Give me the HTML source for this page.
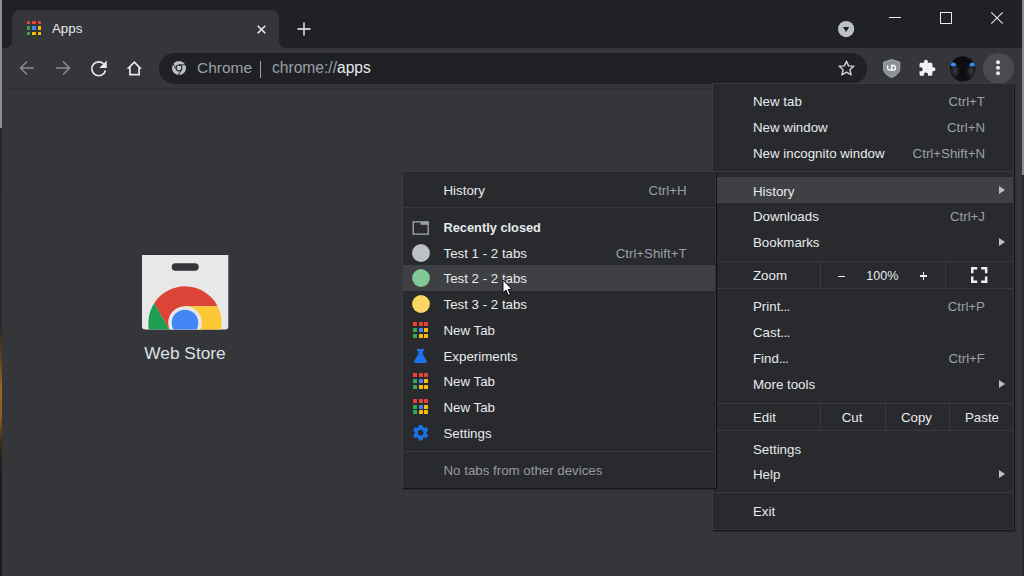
<!DOCTYPE html>
<html><head><meta charset="utf-8">
<style>
*{margin:0;padding:0;box-sizing:border-box}
html,body{width:1024px;height:576px;overflow:hidden;background:#35363a;font-family:"Liberation Sans",sans-serif;position:relative}
.abs{position:absolute}
.t{position:absolute;white-space:nowrap;line-height:1}
svg{position:absolute;overflow:visible}
</style></head><body>
<div class="abs" style="left:0px;top:0px;width:1024px;height:48px;background:#202124;"></div>
<div class="abs" style="left:12px;top:10px;width:267px;height:38px;background:#35363a;border-radius:8px 8px 0 0"></div>
<svg style="left:4px;top:40px" width="8" height="8"><path d="M0 8 Q8 8 8 0 L8 8 Z" fill="#35363a"/></svg>
<svg style="left:279px;top:40px" width="8" height="8"><path d="M0 0 Q0 8 8 8 L0 8 Z" fill="#35363a"/></svg>
<div class="abs" style="left:0px;top:48px;width:1024px;height:40px;background:#35363a;"></div>
<div class="abs" style="left:0px;top:88px;width:1024px;height:1px;background:#2e2f33;"></div>
<div class="abs" style="left:159px;top:53px;width:708px;height:31px;background:#202124;border-radius:15.5px"></div>
<div class="abs" style="left:26.60px;top:20.70px;width:3.7px;height:3.7px;background:#ea4335;border-radius:0.5px"></div>
<div class="abs" style="left:32.05px;top:20.70px;width:3.7px;height:3.7px;background:#ea4335;border-radius:0.5px"></div>
<div class="abs" style="left:37.50px;top:20.70px;width:3.7px;height:3.7px;background:#ea4335;border-radius:0.5px"></div>
<div class="abs" style="left:26.60px;top:26.15px;width:3.7px;height:3.7px;background:#34a853;border-radius:0.5px"></div>
<div class="abs" style="left:32.05px;top:26.15px;width:3.7px;height:3.7px;background:#4285f4;border-radius:0.5px"></div>
<div class="abs" style="left:37.50px;top:26.15px;width:3.7px;height:3.7px;background:#fbbc04;border-radius:0.5px"></div>
<div class="abs" style="left:26.60px;top:31.60px;width:3.7px;height:3.7px;background:#34a853;border-radius:0.5px"></div>
<div class="abs" style="left:32.05px;top:31.60px;width:3.7px;height:3.7px;background:#fbbc04;border-radius:0.5px"></div>
<div class="abs" style="left:37.50px;top:31.60px;width:3.7px;height:3.7px;background:#fbbc04;border-radius:0.5px"></div>
<div class="t" style="left:52.00px;top:21.54px;font-size:13.3px;color:#e8eaed;font-weight:normal;">Apps</div>
<svg style="left:257px;top:24.5px" width="9" height="9"><path d="M0.7 0.7 L8.3 8.3 M8.3 0.7 L0.7 8.3" stroke="#e8eaed" stroke-width="1.6"/></svg>
<svg style="left:297px;top:22px" width="14" height="14"><path d="M7 0.5 V13.5 M0.5 7 H13.5" stroke="#c4c7ca" stroke-width="1.8"/></svg>
<svg style="left:837.6px;top:21.2px" width="16.2" height="16.2"><circle cx="8.1" cy="8.1" r="8.1" fill="#bdc1c6"/><path d="M5.0 5.9 H11.2 L8.1 10.9 Z" fill="#202124"/></svg>
<div class="abs" style="left:889px;top:17px;width:12px;height:1px;background:#e8eaed;"></div>
<svg style="left:940px;top:11.5px" width="12" height="12"><rect x="0.5" y="0.5" width="11" height="11" fill="none" stroke="#e8eaed" stroke-width="1"/></svg>
<svg style="left:991px;top:11.5px" width="12" height="12"><path d="M0.3 0.3 L11.7 11.7 M11.7 0.3 L0.3 11.7" stroke="#e8eaed" stroke-width="1.1"/></svg>
<svg style="left:19px;top:60px" width="16" height="16"><path d="M15 8 H2 M8 1.5 L1.5 8 L8 14.5" fill="none" stroke="#8b8c8f" stroke-width="1.5"/></svg>
<svg style="left:55px;top:60px" width="16" height="16"><path d="M1 8 H14 M8 1.5 L14.5 8 L8 14.5" fill="none" stroke="#8b8c8f" stroke-width="1.5"/></svg>
<svg style="left:87.4px;top:57.1px" width="23.5" height="23.5" viewBox="0 0 24 24"><path d="M17.02 6.98 A7.1 7.1 0 1 0 18.87 13.78" fill="none" stroke="#e8eaed" stroke-width="1.75"/><path d="M12.6 11.2 H20.2 V3.6 Z" fill="#e8eaed"/></svg>
<svg style="left:126px;top:60px" width="17" height="17"><path d="M8.3 2.1 L14.0 8.0 H13.1 V14.7 H3.9 V8.0 H2.6 Z" fill="none" stroke="#e8eaed" stroke-width="1.7" stroke-linejoin="miter"/></svg>
<svg style="left:172px;top:61px" width="14" height="14"><circle cx="7" cy="7" r="7" fill="#bdc1c6"/><circle cx="7" cy="7" r="3.4" fill="#202124"/><circle cx="7" cy="7" r="2.4" fill="#bdc1c6"/>
<path d="M7 3.9 L13.6 3.9 M4.4 8.5 L1.1 2.8 M9.6 8.5 L6.3 14.2" stroke="#202124" stroke-width="1"/></svg>
<div class="t" style="left:197.00px;top:60.48px;font-size:15.5px;color:#9aa0a6;font-weight:normal;">Chrome</div>
<div class="abs" style="left:260px;top:61px;width:1.2px;height:16.5px;background:#9aa0a6;"></div>
<div class="t" style="left:272.00px;top:60.39px;font-size:15.6px;color:#9aa0a6;font-weight:normal;">chrome://<span style="color:#e8eaed">apps</span></div>
<svg style="left:838px;top:60px" width="17" height="16"><path d="M8.5 1.2 L10.6 5.9 L15.8 6.3 L11.9 9.7 L13.1 14.8 L8.5 12.1 L3.9 14.8 L5.1 9.7 L1.2 6.3 L6.4 5.9 Z" fill="none" stroke="#d0d2d5" stroke-width="1.45" stroke-linejoin="round"/></svg>
<svg style="left:882.5px;top:59px" width="18" height="19"><path d="M8.7 0.6 L16.8 3.2 V9.5 C16.8 13.5 13.5 16.5 8.7 18.4 C3.9 16.5 0.6 13.5 0.6 9.5 V3.2 Z" fill="#8d9196" stroke="#a9adb1" stroke-width="1"/>
<path d="M4.6 6.3 V9 A2.05 2.05 0 0 0 8.7 9 V6.3" fill="none" stroke="#f1f3f4" stroke-width="1.5"/><path d="M8.7 6.2 H9.9 A2.55 2.55 0 0 1 9.9 11.3 H8.7 Z" fill="none" stroke="#f1f3f4" stroke-width="1.5"/></svg>
<svg style="left:917.8px;top:59.2px" width="18.2" height="18.2" viewBox="0 0 24 24"><path fill="#f1f3f4" d="M20.5 11H19V7c0-1.1-.9-2-2-2h-4V3.5C13 2.12 11.880 1 10.5 1S8 2.12 8 3.5V5H4c-1.1 0-1.99.9-1.99 2v3.8H3.5c1.49 0 2.7 1.21 2.7 2.7s-1.21 2.7-2.7 2.7H2V20c0 1.1.9 2 2 2h3.8v-1.5c0-1.490 1.21-2.7 2.7-2.7 1.49 0 2.7 1.21 2.7 2.7V22H17c1.1 0 2-.9 2-2v-4h1.5c1.38 0 2.5-1.12 2.5-2.5S21.88 11 20.5 11z"/></svg>
<svg style="left:949.5px;top:55.8px" width="26" height="26"><defs><clipPath id="avc"><circle cx="12.75" cy="12.75" r="12.6"/></clipPath>
<radialGradient id="avl" cx="0.5" cy="0.5" r="0.5"><stop offset="0" stop-color="#383c3f"/><stop offset="1" stop-color="#383c3f" stop-opacity="0"/></radialGradient></defs>
<g clip-path="url(#avc)"><rect width="26" height="26" fill="#0d0e10"/>
<ellipse cx="5" cy="15" rx="5" ry="8" fill="url(#avl)"/><ellipse cx="21" cy="15" rx="5" ry="8" fill="url(#avl)"/>
<ellipse cx="3.2" cy="8.5" rx="2.9" ry="2.0" fill="#2a8cf5" transform="rotate(12 3.2 8.5)"/><ellipse cx="22.4" cy="8.5" rx="2.9" ry="2.0" fill="#2a8cf5" transform="rotate(-12 22.4 8.5)"/></g></svg>
<svg style="left:983px;top:53px" width="31" height="31"><circle cx="15.5" cy="15.5" r="15.5" fill="#4a4b4e"/><circle cx="15" cy="9.3" r="2" fill="#e8eaed"/><circle cx="15" cy="14.8" r="2" fill="#e8eaed"/><circle cx="15" cy="20.3" r="2" fill="#e8eaed"/></svg>
<div class="abs" style="left:0px;top:0px;width:2px;height:128px;background:#8e8e8e;"></div>
<div class="abs" style="left:0px;top:128px;width:2px;height:448px;background:linear-gradient(#24262a 0px,#2a2a2a 100px,#2c2824 200px,#5a4020 230px,#9a6824 260px,#8a5a20 290px,#3a2a1c 315px,#1e1a18 345px,#1e1a18 448px);"></div>
<div class="abs" style="left:1022px;top:0px;width:2px;height:175px;background:#8b8b8b;"></div>
<div class="abs" style="left:1022px;top:175px;width:2px;height:401px;background:#2f2a28;"></div>
<svg style="left:142px;top:255px" width="87" height="75" viewBox="0 0 87 75">
<defs><clipPath id="bag"><path d="M0 0 H86.3 V71.6 A3 3 0 0 1 83.3 74.6 H3 A3 3 0 0 1 0 71.6 Z"/></clipPath></defs>
<path d="M0 0 H86.3 V71.6 A3 3 0 0 1 83.3 74.6 H3 A3 3 0 0 1 0 71.6 Z" fill="#e8e8e8"/>
<rect x="29.7" y="8.2" width="27" height="7.5" rx="3.75" fill="#35363a"/>
<g clip-path="url(#bag)"><g transform="translate(43 68)">
<path d="M0 -16.8 L32.6 -16.8 A36.7 36.7 0 0 0 -30.85 -19.83 L-14.55 8.4 Z" fill="#db4437"/>
<path d="M14.55 8.4 L-1.75 36.63 A36.7 36.7 0 0 0 32.6 -16.8 L0 -16.8 Z" fill="#fcc934"/>
<path d="M-14.55 8.4 L-30.85 -19.83 A36.7 36.7 0 0 0 -1.75 36.63 L14.55 8.4 Z" fill="#1e9e50"/>
<circle r="16.8" fill="#e8e8e8"/><circle r="13.3" fill="#4285f4"/>
</g></g></svg>
<div class="t" style="left:85.00px;width:200px;text-align:center;top:344.75px;font-size:17.3px;color:#dfe1e4;font-weight:normal;">Web Store</div>
<div class="abs" style="left:712px;top:83px;width:302px;height:447px;background:#292a2d;border:1px solid #3a3b3e;border-right-color:#313235;border-bottom-color:#313235;box-shadow:1px 1px 0 rgba(0,0,0,0.45),1px 2px 2px rgba(0,0,0,0.25)"></div>
<div class="abs" style="left:713px;top:177px;width:300px;height:26px;background:#3f4043;"></div>
<div class="t" style="left:753.00px;top:184.54px;font-size:13.3px;color:#e8eaed;font-weight:normal;">History</div>
<div class="t" style="left:753.00px;top:94.94px;font-size:13.3px;color:#e8eaed;font-weight:normal;">New tab</div>
<div class="t" style="right:39.00px;top:94.94px;font-size:13.3px;color:#9aa0a6;font-weight:normal;">Ctrl+T</div>
<div class="t" style="left:753.00px;top:120.74px;font-size:13.3px;color:#e8eaed;font-weight:normal;">New window</div>
<div class="t" style="right:39.00px;top:120.74px;font-size:13.3px;color:#9aa0a6;font-weight:normal;">Ctrl+N</div>
<div class="t" style="left:753.00px;top:146.54px;font-size:13.3px;color:#e8eaed;font-weight:normal;">New incognito window</div>
<div class="t" style="right:39.00px;top:146.54px;font-size:13.3px;color:#9aa0a6;font-weight:normal;">Ctrl+Shift+N</div>
<div class="t" style="left:753.00px;top:210.14px;font-size:13.3px;color:#e8eaed;font-weight:normal;">Downloads</div>
<div class="t" style="right:39.00px;top:210.14px;font-size:13.3px;color:#9aa0a6;font-weight:normal;">Ctrl+J</div>
<div class="t" style="left:753.00px;top:235.94px;font-size:13.3px;color:#e8eaed;font-weight:normal;">Bookmarks</div>
<div class="t" style="left:753.00px;top:300.34px;font-size:13.3px;color:#e8eaed;font-weight:normal;">Print<span style="letter-spacing:-0.6px">...</span></div>
<div class="t" style="right:39.00px;top:300.34px;font-size:13.3px;color:#9aa0a6;font-weight:normal;">Ctrl+P</div>
<div class="t" style="left:753.00px;top:326.14px;font-size:13.3px;color:#e8eaed;font-weight:normal;">Cast<span style="letter-spacing:-0.6px">...</span></div>
<div class="t" style="left:753.00px;top:351.84px;font-size:13.3px;color:#e8eaed;font-weight:normal;">Find<span style="letter-spacing:-0.6px">...</span></div>
<div class="t" style="right:39.00px;top:351.84px;font-size:13.3px;color:#9aa0a6;font-weight:normal;">Ctrl+F</div>
<div class="t" style="left:753.00px;top:378.04px;font-size:13.3px;color:#e8eaed;font-weight:normal;">More tools</div>
<div class="t" style="left:753.00px;top:442.64px;font-size:13.3px;color:#e8eaed;font-weight:normal;">Settings</div>
<div class="t" style="left:753.00px;top:468.44px;font-size:13.3px;color:#e8eaed;font-weight:normal;">Help</div>
<div class="t" style="left:753.00px;top:505.44px;font-size:13.3px;color:#e8eaed;font-weight:normal;">Exit</div>
<svg style="left:999px;top:186.4px" width="6" height="8"><path d="M0 0 L6 4 L0 8 Z" fill="#bdc1c6"/></svg>
<svg style="left:999px;top:237.6px" width="6" height="8"><path d="M0 0 L6 4 L0 8 Z" fill="#bdc1c6"/></svg>
<svg style="left:999px;top:380.0px" width="6" height="8"><path d="M0 0 L6 4 L0 8 Z" fill="#bdc1c6"/></svg>
<svg style="left:999px;top:470.4px" width="6" height="8"><path d="M0 0 L6 4 L0 8 Z" fill="#bdc1c6"/></svg>
<div class="abs" style="left:713px;top:171px;width:300px;height:1px;background:#38393c;"></div>
<div class="abs" style="left:713px;top:261px;width:300px;height:1px;background:#38393c;"></div>
<div class="abs" style="left:713px;top:288px;width:300px;height:1px;background:#38393c;"></div>
<div class="abs" style="left:713px;top:403px;width:300px;height:1px;background:#38393c;"></div>
<div class="abs" style="left:713px;top:430px;width:300px;height:1px;background:#38393c;"></div>
<div class="abs" style="left:713px;top:492px;width:300px;height:1px;background:#38393c;"></div>
<div class="t" style="left:753.00px;top:269.24px;font-size:13.3px;color:#e8eaed;font-weight:normal;">Zoom</div>
<div class="abs" style="left:820px;top:262px;width:1px;height:26px;background:#38393c;"></div>
<div class="abs" style="left:945px;top:262px;width:1px;height:26px;background:#38393c;"></div>
<div class="abs" style="left:837.5px;top:275.5px;width:7px;height:1.3px;background:#e8eaed;"></div>
<div class="t" style="left:782.30px;width:200px;text-align:center;top:269.92px;font-size:12.5px;color:#e8eaed;font-weight:normal;">100%</div>
<div class="abs" style="left:919.5px;top:275.4px;width:7.5px;height:1.3px;background:#e8eaed;"></div>
<div class="abs" style="left:922.6px;top:272.2px;width:1.3px;height:7.7px;background:#e8eaed;"></div>
<svg style="left:971.2px;top:267px" width="17" height="16"><path d="M1.25 6.3 V1.25 H6.3 M10.1 1.25 H15.15 V6.3 M15.15 9.6 V14.65 H10.1 M6.3 14.65 H1.25 V9.6" fill="none" stroke="#eceef0" stroke-width="2.5"/></svg>
<div class="t" style="left:753.00px;top:411.44px;font-size:13.3px;color:#e8eaed;font-weight:normal;">Edit</div>
<div class="abs" style="left:820px;top:404px;width:1px;height:27px;background:#38393c;"></div>
<div class="abs" style="left:885px;top:404px;width:1px;height:27px;background:#38393c;"></div>
<div class="abs" style="left:949px;top:404px;width:1px;height:27px;background:#38393c;"></div>
<div class="t" style="left:752.00px;width:200px;text-align:center;top:411.44px;font-size:13.3px;color:#e8eaed;font-weight:normal;">Cut</div>
<div class="t" style="left:816.50px;width:200px;text-align:center;top:411.44px;font-size:13.3px;color:#e8eaed;font-weight:normal;">Copy</div>
<div class="t" style="left:882.00px;width:200px;text-align:center;top:411.44px;font-size:13.3px;color:#e8eaed;font-weight:normal;">Paste</div>
<div class="abs" style="left:402px;top:171px;width:314px;height:317px;background:#292a2d;border:1px solid #3a3b3e;border-right-color:#313235;border-bottom-color:#2b2c2f;box-shadow:1px 1px 0 rgba(0,0,0,0.45),1px 2px 2px rgba(0,0,0,0.25)"></div>
<div class="t" style="left:443.50px;top:183.94px;font-size:13.3px;color:#e8eaed;font-weight:normal;">History</div>
<div class="t" style="right:337.40px;top:183.94px;font-size:13.3px;color:#9aa0a6;font-weight:normal;">Ctrl+H</div>
<div class="abs" style="left:403px;top:207px;width:312px;height:1px;background:#38393c;"></div>
<svg style="left:412px;top:220.5px" width="17" height="14"><rect x="1.2" y="0.9" width="15" height="12.2" fill="none" stroke="#9aa0a6" stroke-width="1.4"/><rect x="8.6" y="0.9" width="7.6" height="2.9" fill="#9aa0a6"/></svg>
<div class="t" style="left:443.50px;top:222.06px;font-size:12.8px;color:#e8eaed;font-weight:bold;">Recently closed</div>
<div class="abs" style="left:403px;top:265.4px;width:312px;height:26px;background:#3f4043;"></div>
<div class="t" style="left:443.50px;top:247.04px;font-size:13.3px;color:#e8eaed;font-weight:normal;">Test 1 - 2 tabs</div>
<svg style="left:411.75px;top:244.00px" width="18" height="18"><circle cx="9" cy="9" r="8.9" fill="#bdc1c6"/></svg>
<div class="t" style="left:443.50px;top:272.24px;font-size:13.3px;color:#e8eaed;font-weight:normal;">Test 2 - 2 tabs</div>
<svg style="left:411.75px;top:269.20px" width="18" height="18"><circle cx="9" cy="9" r="8.9" fill="#81c995"/></svg>
<div class="t" style="left:443.50px;top:297.64px;font-size:13.3px;color:#e8eaed;font-weight:normal;">Test 3 - 2 tabs</div>
<svg style="left:411.75px;top:294.60px" width="18" height="18"><circle cx="9" cy="9" r="8.9" fill="#fdd663"/></svg>
<div class="t" style="left:443.50px;top:324.49px;font-size:13.3px;color:#e8eaed;font-weight:normal;">New Tab</div>
<div class="abs" style="left:412.90px;top:322.35px;width:4px;height:4px;background:#ea4335;border-radius:0.5px"></div>
<div class="abs" style="left:418.50px;top:322.35px;width:4px;height:4px;background:#ea4335;border-radius:0.5px"></div>
<div class="abs" style="left:424.10px;top:322.35px;width:4px;height:4px;background:#ea4335;border-radius:0.5px"></div>
<div class="abs" style="left:412.90px;top:327.95px;width:4px;height:4px;background:#34a853;border-radius:0.5px"></div>
<div class="abs" style="left:418.50px;top:327.95px;width:4px;height:4px;background:#4285f4;border-radius:0.5px"></div>
<div class="abs" style="left:424.10px;top:327.95px;width:4px;height:4px;background:#fbbc04;border-radius:0.5px"></div>
<div class="abs" style="left:412.90px;top:333.55px;width:4px;height:4px;background:#34a853;border-radius:0.5px"></div>
<div class="abs" style="left:418.50px;top:333.55px;width:4px;height:4px;background:#fbbc04;border-radius:0.5px"></div>
<div class="abs" style="left:424.10px;top:333.55px;width:4px;height:4px;background:#fbbc04;border-radius:0.5px"></div>
<div class="t" style="left:443.50px;top:349.94px;font-size:13.3px;color:#e8eaed;font-weight:normal;">Experiments</div>
<svg style="left:413px;top:348.60px" width="15" height="15"><path d="M3.9 0.1 H11.1 V1.9 H9.8 V5.3 L13.9 12 Q14.5 13.9 12.5 13.9 H2.5 Q0.5 13.9 1.1 12 L5.2 5.3 V1.9 H3.9 Z" fill="#1a73e8"/></svg>
<div class="t" style="left:443.50px;top:375.44px;font-size:13.3px;color:#e8eaed;font-weight:normal;">New Tab</div>
<div class="abs" style="left:412.90px;top:373.30px;width:4px;height:4px;background:#ea4335;border-radius:0.5px"></div>
<div class="abs" style="left:418.50px;top:373.30px;width:4px;height:4px;background:#ea4335;border-radius:0.5px"></div>
<div class="abs" style="left:424.10px;top:373.30px;width:4px;height:4px;background:#ea4335;border-radius:0.5px"></div>
<div class="abs" style="left:412.90px;top:378.90px;width:4px;height:4px;background:#34a853;border-radius:0.5px"></div>
<div class="abs" style="left:418.50px;top:378.90px;width:4px;height:4px;background:#4285f4;border-radius:0.5px"></div>
<div class="abs" style="left:424.10px;top:378.90px;width:4px;height:4px;background:#fbbc04;border-radius:0.5px"></div>
<div class="abs" style="left:412.90px;top:384.50px;width:4px;height:4px;background:#34a853;border-radius:0.5px"></div>
<div class="abs" style="left:418.50px;top:384.50px;width:4px;height:4px;background:#fbbc04;border-radius:0.5px"></div>
<div class="abs" style="left:424.10px;top:384.50px;width:4px;height:4px;background:#fbbc04;border-radius:0.5px"></div>
<div class="t" style="left:443.50px;top:401.24px;font-size:13.3px;color:#e8eaed;font-weight:normal;">New Tab</div>
<div class="abs" style="left:412.90px;top:399.10px;width:4px;height:4px;background:#ea4335;border-radius:0.5px"></div>
<div class="abs" style="left:418.50px;top:399.10px;width:4px;height:4px;background:#ea4335;border-radius:0.5px"></div>
<div class="abs" style="left:424.10px;top:399.10px;width:4px;height:4px;background:#ea4335;border-radius:0.5px"></div>
<div class="abs" style="left:412.90px;top:404.70px;width:4px;height:4px;background:#34a853;border-radius:0.5px"></div>
<div class="abs" style="left:418.50px;top:404.70px;width:4px;height:4px;background:#4285f4;border-radius:0.5px"></div>
<div class="abs" style="left:424.10px;top:404.70px;width:4px;height:4px;background:#fbbc04;border-radius:0.5px"></div>
<div class="abs" style="left:412.90px;top:410.30px;width:4px;height:4px;background:#34a853;border-radius:0.5px"></div>
<div class="abs" style="left:418.50px;top:410.30px;width:4px;height:4px;background:#fbbc04;border-radius:0.5px"></div>
<div class="abs" style="left:424.10px;top:410.30px;width:4px;height:4px;background:#fbbc04;border-radius:0.5px"></div>
<div class="t" style="left:443.50px;top:426.74px;font-size:13.3px;color:#e8eaed;font-weight:normal;">Settings</div>
<svg style="left:410.8px;top:423.30px" width="19.4" height="19.4" viewBox="0 0 24 24"><path fill="#1a73e8" d="M19.14 12.94c.04-.3.06-.61.06-.94 0-.32-.02-.64-.07-.94l2.03-1.58c.18-.14.23-.41.12-.61l-1.92-3.32c-.12-.22-.37-.29-.59-.22l-2.39.96c-.5-.38-1.03-.7-1.62-.94l-.36-2.54c-.04-.24-.24-.41-.48-.41h-3.84c-.24 0-.43.17-.47.41l-.36 2.54c-.59.24-1.13.57-1.62.94l-2.39-.96c-.22-.08-.47 0-.59.22L2.74 8.87c-.12.21-.08.47.12.61l2.03 1.58c-.05.3-.09.63-.09.94s.02.64.07.94l-2.03 1.58c-.18.14-.23.41-.12.61l1.92 3.32c.12.22.37.29.59.22l2.39-.96c.5.38 1.03.7 1.62.94l.36 2.54c.05.24.24.41.48.41h3.84c.24 0 .44-.17.47-.41l.36-2.54c.59-.24 1.13-.56 1.62-.94l2.39.96c.22.08.47 0 .59-.22l1.92-3.32c.12-.22.07-.47-.12-.61l-2.01-1.58zM12 15.6c-1.98 0-3.6-1.62-3.6-3.6s1.62-3.6 3.6-3.6 3.6 1.62 3.6 3.6-1.62 3.6-3.6 3.6z"/></svg>
<div class="t" style="right:337.40px;top:247.04px;font-size:13.3px;color:#9aa0a6;font-weight:normal;">Ctrl+Shift+T</div>
<div class="abs" style="left:403px;top:451px;width:312px;height:1px;background:#38393c;"></div>
<div class="t" style="left:443.50px;top:464.34px;font-size:13.3px;color:#979ba0;font-weight:normal;">No tabs from other devices</div>
<svg style="left:503.3px;top:280.3px" width="12" height="17"><path d="M0 0 L0 12.8 L3.0 10.0 L5.2 15.3 L7.3 14.4 L5.1 9.4 L9.0 9.4 Z" fill="#fff" stroke="#000" stroke-width="0.9" stroke-linejoin="miter"/></svg>
</body></html>
